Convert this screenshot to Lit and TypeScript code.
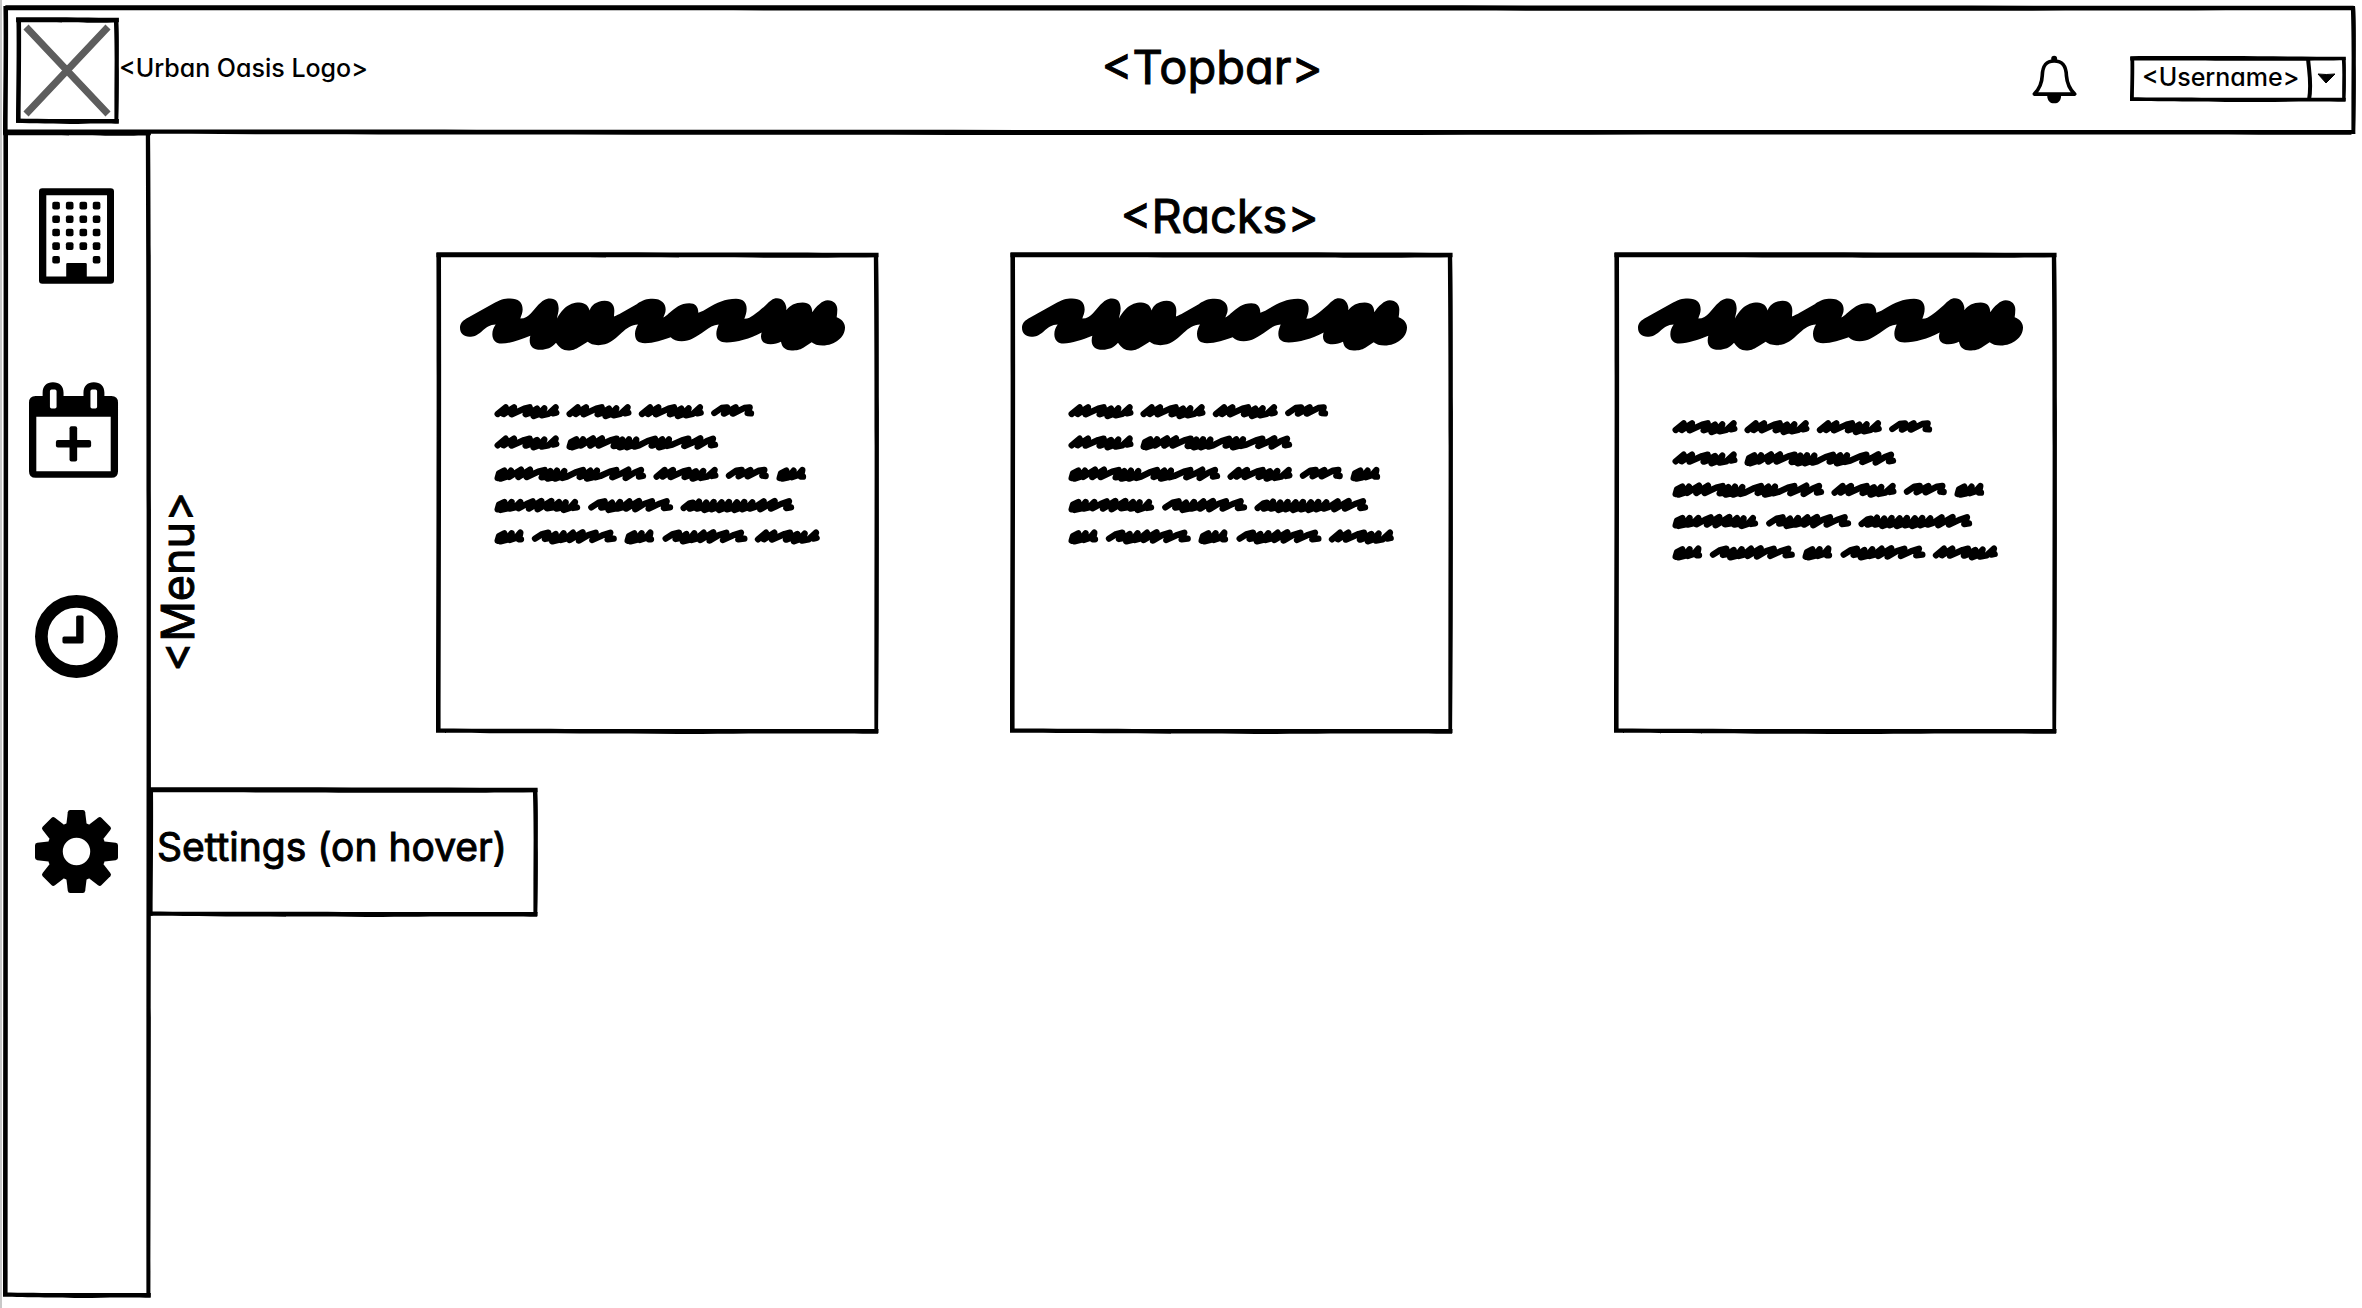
import { LitElement, html, svg, css } from "lit";
import { customElement, property } from "lit/decorators.js";
import { classMap } from "lit/directives/class-map.js";

/**
 * Hand-drawn rectangle over its positioned parent. Each edge stretches only
 * along its own length, so the wobble stays within a pixel at any size.
 */
@customElement("sketch-frame")
class SketchFrame extends LitElement {
  static styles = css`
    :host {
      position: absolute;
      inset: 0;
      pointer-events: none;
    }
    svg {
      position: absolute;
      display: block;
    }
    .top,
    .bottom {
      left: 0;
      width: 100%;
      height: 6px;
    }
    .left,
    .right {
      top: 1px;
      width: 6px;
      height: calc(100% - 2px);
    }
    .top {
      top: 0;
    }
    .bottom {
      bottom: 0;
    }
    .left {
      left: 0;
    }
    .right {
      right: 0;
    }
    :host([thin]) .top,
    :host([thin]) .bottom {
      height: 5px;
    }
    :host([thin]) .left,
    :host([thin]) .right {
      width: 5px;
    }
  `;

  render() {
    return html`
      <svg class="top" viewBox="0 0 100 6" preserveAspectRatio="none" aria-hidden="true">
        <path d="M0.1 0.2 C30 0 70 0.4 99.9 0.8 L99.9 5.2 C80 6.2 60 5.4 0.1 5.3 Z" />
      </svg>
      <svg class="right" viewBox="0 0 6 100" preserveAspectRatio="none" aria-hidden="true">
        <path d="M5 0 C6 5 6 25 5.9 50 C6 80 5.6 90 5.4 100 L1.4 100 C1.2 80 1.6 60 1.6 40 C1.6 20 1.2 10 0.8 0 Z" />
      </svg>
      <svg class="bottom" viewBox="0 0 100 6" preserveAspectRatio="none" aria-hidden="true">
        <path d="M0 0.4 C25 1 60 1 99.9 1 L99.8 5.8 C90 5.4 75 5.4 60 6 C40 6 15 5.4 0 4.8 Z" />
      </svg>
      <svg class="left" viewBox="0 0 6 100" preserveAspectRatio="none" aria-hidden="true">
        <path d="M0.4 0 C1 30 0.2 70 0 99.8 L4.6 99.8 C4.8 70 5.4 30 5 0 Z" />
      </svg>
    `;
  }
}

const WORDS: Record<string, string> = {
  a: "8,30 32,10 26,30 57,10 50,31 88,14 104,10 92,31 106,26 126,14 116,36 132,30 148,13 140,34 160,30 182,10 174,28 184,26",
  b: "8,27 30,12 46,10 37,29 72,10 64,29 98,12 114,10 108,27 118,28",
  c: "8,34 12,20 28,12 16,36 34,30 48,12 42,31 78,9 70,31 105,9 95,31 130,15 149,10 140,32 154,30 166,13 158,36 174,32 186,12 180,36 196,30 208,13 202,34 216,30 242,17 264,10 254,31 268,26 286,12 276,36 292,32 306,12 300,32 316,28 345,15 364,10 352,32 380,20 400,9 392,34 420,17 438,10 432,30 444,28",
  d: "8,34 12,20 28,12 16,36 34,32 50,12 44,32 62,26 76,10 72,30 78,30",
  e: "8,34 12,20 28,12 16,36 34,32 50,12 44,32 60,28 76,12 70,31 95,18 113,10 102,32 139,9 128,34 169,9 156,31 174,28 192,12 184,32 202,28 212,13 206,36 224,30 240,12 234,30 246,28",
  f: "8,28 30,14 48,10 38,29 54,26 70,14 60,36 78,32 94,12 86,32 100,28 122,10 112,32 151,9 140,34 168,17 190,10 180,32 210,18 234,10 226,30 244,28",
  g: "8,30 26,16 36,14 26,32 44,26 54,11 48,32 64,28 76,14 70,36 86,30 98,12 92,34 108,28 122,13 114,36 130,30 144,12 138,34 154,30 168,13 160,36 176,30 190,12 184,34 200,28 214,13 206,32 224,26 248,10 238,34 281,9 270,32 300,18 324,10 316,30 330,28",
};

const LINES: [string, number][][] = [
  [["a", 0], ["a", 216], ["a", 433], ["b", 650]],
  [["a", 0], ["c", 216]],
  [["c", 0], ["a", 477], ["b", 694], ["d", 846]],
  [["e", 0], ["f", 281], ["g", 558]],
  [["d", 0], ["f", 112], ["d", 390], ["f", 504], ["a", 781]],
];

/** A rack card whose heading and copy are scribbled placeholders. */
@customElement("rack-card")
class RackCard extends LitElement {
  @property() variant = "";

  static styles = css`
    :host {
      display: block;
      min-width: 0;
    }
    .card {
      position: relative;
      box-sizing: border-box;
      height: 482px;
      padding: 46px 34px 0 24px;
    }
    .card.tight {
      padding-left: 12px;
      padding-right: 46px;
    }
    svg {
      display: block;
      max-width: 100%;
    }
    .title {
      width: 385px;
      height: 53px;
    }
    .copy {
      width: 325px;
      height: 140px;
      margin: 53px 0 0 35px;
      overflow: visible;
    }
    .tight .copy {
      margin-left: 47px;
    }
    .low .copy {
      margin-top: 69px;
    }
    polyline {
      fill: none;
      stroke: #000;
      stroke-width: 19;
      stroke-linecap: round;
      stroke-linejoin: round;
    }
  `;

  render() {
    const cls = { card: true, tight: this.variant === "tight", low: this.variant === "low" };
    return html`
      <article class=${classMap(cls)}>
        <sketch-frame></sketch-frame>
        <svg class="title" viewBox="90 158 1155 158" aria-hidden="true">
          <path
            d="M90 247 C90 235 97 227 108 220 L190 174 C210 163 222 159 240 159 C265 159 278 170 278 192 C278 203 273 212 271 219 C285 219 295 212 303 203 L325 178 C337 166 346 159 360 159 C378 159 385 170 386 188 C386 200 382 210 381 219 C386 210 392 200 402 190 C418 175 432 171 448 171 C465 171 476 182 479 195 C484 180 498 167 524 166 C545 166 553 180 553 195 C553 203 552 208 552 213 C560 210 566 207 575 202 L620 176 C640 163 650 160 668 160 C695 160 707 175 707 192 C707 203 702 210 700 216 C706 213 710 210 715 205 C735 187 752 173 778 173 C795 173 805 182 805 202 C815 199 825 193 835 187 C860 173 885 160 918 160 C940 160 950 172 950 190 C950 203 946 212 943 220 C955 219 962 215 970 209 C985 198 995 190 1007 179 C1020 166 1028 158 1041 158 C1058 158 1066 170 1069 185 L1069 194 C1080 180 1095 171 1118 171 C1138 171 1146 182 1147 200 C1155 188 1160 182 1168 176 C1178 167 1185 164 1193 164 C1212 164 1222 177 1222 192 C1222 200 1221 208 1220 215 C1235 220 1245 232 1245 246 C1245 275 1215 300 1178 300 C1163 300 1152 296 1145 290 L1120 307 C1108 314 1100 315 1085 315 C1068 315 1056 307 1053 289 C1043 294 1035 296 1022 296 C1003 296 993 288 993 272 C993 268 994 264 995 261 C960 280 920 291 890 291 C870 291 859 283 859 265 C859 255 862 247 866 237 C850 238 838 246 825 256 C795 277 780 287 755 287 C740 287 730 283 722 275 C700 283 670 293 645 293 C625 293 615 285 615 265 C615 255 619 245 624 237 C605 238 590 248 575 262 C550 285 535 299 505 299 C490 299 480 295 473 289 L450 303 C435 312 428 315 415 315 C398 315 388 307 378 292 C365 307 350 313 332 313 C310 313 299 303 299 285 C299 280 300 275 301 271 C270 283 240 294 215 294 C197 294 187 283 187 266 C187 255 191 246 197 237 C180 237 168 246 155 258 C140 270 132 274 118 274 C101 274 90 263 90 247 Z"
          />
        </svg>
        <svg class="copy" viewBox="0 0 975 420" aria-hidden="true">
          ${LINES.map(
            (line, row) => svg`<g transform="translate(0 ${row * 94})">
              ${line.map(([w, x]) => svg`<polyline transform="translate(${x} 0)" points=${WORDS[w]} />`)}
            </g>`
          )}
        </svg>
      </article>
    `;
  }
}

const buildingIcon = html`
  <svg width="75" height="96" viewBox="119 83 226 288" aria-hidden="true">
    <path
      fill-rule="evenodd"
      d="M129 83 H335 Q345 83 345 93 V361 Q345 371 335 371 H129 Q119 371 119 361 V93 Q119 83 129 83 Z M141 104 V349 H201 V312 Q201 308 205 308 H259 Q263 308 263 312 V349 H324 V104 Z"
    />
    ${[124, 165, 205, 246, 287].map((y, row) =>
      [159, 200, 241, 281].map((x, col) =>
        row === 4 && (col === 1 || col === 2)
          ? null
          : svg`<rect x=${x} y=${y} width="23" height="23" rx="6" />`
      )
    )}
  </svg>
`;

const calendarIcon = html`
  <svg width="95" height="96" viewBox="88 667 286 288" aria-hidden="true">
    <path
      fill-rule="evenodd"
      d="M108 709 H129 V699 C129 678 141 667 160 667 C180 667 192 678 192 699 V709 H252 V699 C252 678 264 667 283 667 C303 667 315 678 315 699 V709 H336 Q356 709 356 729 V935 Q356 955 336 955 H108 Q88 955 88 935 V729 Q88 709 108 709 Z M110 771 V935 H334 V771 Z M156 689 Q151 689 151 694 V741 Q151 746 156 746 H166 Q171 746 171 741 V694 Q171 689 166 689 Z M278 689 Q273 689 273 694 V741 Q273 746 278 746 H288 Q293 746 293 741 V694 Q293 689 288 689 Z"
    />
    <rect x="169" y="841" width="106" height="23" rx="6" />
    <rect x="210" y="800" width="23" height="106" rx="6" />
  </svg>
`;

const clockIcon = html`
  <svg width="83" height="83" viewBox="-124 -124 248 248" aria-hidden="true">
    <circle r="105" fill="none" stroke="#000" stroke-width="38" />
    <path d="M4 -63 H16 Q21 -63 21 -58 V16 Q21 21 16 21 H-37 Q-42 21 -42 16 V5 Q-42 0 -37 0 H-1 V-58 Q-1 -63 4 -63 Z" />
  </svg>
`;

const gearIcon = html`
  <svg width="83" height="83" viewBox="-124 -124 248 248" aria-hidden="true">
    <circle r="65" fill="none" stroke="#000" stroke-width="48" />
    ${[0, 45, 90, 135, 180, 225, 270, 315].map(
      (a) => svg`<path transform="rotate(${a})" d="M-30 -84 L-26 -117 Q-25 -124 -19 -124 H19 Q25 -124 26 -117 L30 -84 L20 -70 H-20 Z" />`
    )}
  </svg>
`;

@customElement("app-root")
class AppRoot extends LitElement {
  static styles = css`
    :host {
      display: block;
      color: #000;
      font-family: Inter, "Open Sans", sans-serif;
      font-feature-settings: "cv11";
      font-weight: 500;
    }
    .page {
      box-sizing: border-box;
      display: flex;
      flex-direction: column;
      min-height: 100vh;
      padding-bottom: 10px;
      border-left: 2px solid #c8c8c8;
      background: #fff;
    }
    svg {
      display: block;
    }
    h1,
    h2 {
      margin: 0;
      font-size: 47px;
      line-height: 56px;
      font-weight: 400;
      -webkit-text-stroke: 1px #000;
      stroke-linejoin: round;
    }
    .topbar {
      position: relative;
      box-sizing: border-box;
      display: grid;
      grid-template-columns: 1fr auto 1fr;
      align-items: center;
      height: 130px;
      margin: 5px 6px 0 1px;
      padding: 0 10px 0 13px;
    }
    .topbar h1 {
      padding: 0 0 6px 62px;
    }
    .brand {
      display: flex;
      align-items: center;
    }
    .logo {
      position: relative;
      width: 103px;
      height: 107px;
    }
    .cross {
      stroke: #5d5d5d;
      stroke-width: 7;
    }
    .brand-name {
      padding: 0 0 4px 0;
      font-size: 25px;
      line-height: 32px;
    }
    .account {
      display: flex;
      align-items: center;
      justify-content: flex-end;
      gap: 53px;
      padding-top: 18px;
    }
    button {
      display: block;
      padding: 0;
      border: 0;
      background: none;
      color: inherit;
      cursor: pointer;
    }
    .user {
      position: relative;
      width: 216px;
      height: 46px;
    }
    .user select {
      width: 100%;
      height: 100%;
      padding: 0 38px 4px 12px;
      border: 0;
      background: none;
      color: inherit;
      font: inherit;
      font-size: 25px;
      font-feature-settings: inherit;
      appearance: none;
    }
    .caret {
      position: absolute;
      top: 0;
      right: 0;
      pointer-events: none;
    }
    .body {
      flex: 1;
      display: flex;
      align-items: stretch;
      margin: -5px 0 0 1px;
    }
    .rail {
      position: relative;
      box-sizing: border-box;
      flex: none;
      width: 148px;
      padding-top: 5px;
    }
    .rail ul {
      display: grid;
      grid-template-rows: 201px 188px 225px 205px;
      margin: 0;
      padding: 0;
      list-style: none;
    }
    .rail li {
      position: relative;
      display: grid;
      place-items: center;
      padding-right: 1px;
    }
    .tip {
      position: absolute;
      left: 145px;
      box-sizing: border-box;
      display: flex;
      align-items: center;
      width: 390px;
      height: 130px;
      padding: 0 0 10px 9px;
      font-size: 39px;
      line-height: 48px;
      font-weight: 400;
      white-space: nowrap;
      -webkit-text-stroke: 1px #000;
      stroke-linejoin: round;
    }
    main {
      flex: 1;
      display: grid;
      grid-template-columns: 285fr 443fr 131fr 443fr 161fr 443fr 305fr;
      grid-template-rows: 122px auto;
      align-content: start;
    }
    main h2 {
      grid-area: 1 / 4;
      align-self: end;
      padding: 0 24px 8px 0;
      text-align: center;
    }
    main .menu-label {
      grid-area: 2 / 1;
      place-self: end start;
      padding: 0 0 62px;
      font-size: 45px;
      line-height: 54px;
      writing-mode: vertical-rl;
    }
    .menu-label span {
      display: block;
      rotate: 180deg;
    }
    .first {
      grid-area: 2 / 2;
    }
    .second {
      grid-area: 2 / 4;
    }
    .third {
      grid-area: 2 / 6;
    }
  `;

  render() {
    return html`
      <div class="page">
        <header class="topbar">
          <sketch-frame></sketch-frame>
          <div class="brand">
            <div class="logo">
              <sketch-frame></sketch-frame>
              <svg class="cross" width="103" height="107" viewBox="0 0 103 107" aria-hidden="true">
                <path d="M10 10 L92 97 M92 10 L10 97" />
              </svg>
            </div>
            <span class="brand-name">&lt;Urban Oasis Logo&gt;</span>
          </div>
          <h1>&lt;Topbar&gt;</h1>
          <div class="account">
            <button aria-label="Notifications">
              <svg width="45" height="49" viewBox="155 163 136 146" aria-hidden="true">
                <path
                  fill="none"
                  stroke="#000"
                  stroke-width="11"
                  stroke-linejoin="round"
                  d="M162 280 C178 264 185 250 186 224 C187 196 196 180 222 180 C249 180 258 196 259 224 C261 250 268 264 284 280 Z"
                />
                <circle cx="222" cy="173" r="9" />
                <path d="M201 284 C201 299 209 308 222 308 C235 308 243 299 243 284 Z" />
              </svg>
            </button>
            <div class="user">
              <sketch-frame thin></sketch-frame>
              <select aria-label="Account">
                <option>&lt;Username&gt;</option>
              </select>
              <svg class="caret" width="40" height="46" viewBox="0 0 40 46" aria-hidden="true">
                <path fill="none" stroke="#000" stroke-width="4" d="M2 2 C3 16 6 28 3 44" />
                <path d="M12 18 Q20 19 29 18 L20 27 Z" stroke="#000" stroke-linejoin="round" />
              </svg>
            </div>
          </div>
        </header>
        <div class="body">
          <nav class="rail" aria-label="Menu">
            <sketch-frame></sketch-frame>
            <ul>
              <li><button aria-label="Buildings">${buildingIcon}</button></li>
              <li><button aria-label="Add event">${calendarIcon}</button></li>
              <li><button aria-label="History">${clockIcon}</button></li>
              <li>
                <button aria-labelledby="settings-tip">${gearIcon}</button>
                <div class="tip" id="settings-tip" role="tooltip">
                  <sketch-frame></sketch-frame>Settings (on hover)
                </div>
              </li>
            </ul>
          </nav>
          <main>
            <h2>&lt;Racks&gt;</h2>
            <h2 class="menu-label"><span>&lt;Menu&gt;</span></h2>
            <rack-card class="first"></rack-card>
            <rack-card class="second" variant="tight"></rack-card>
            <rack-card class="third" variant="low"></rack-card>
          </main>
        </div>
      </div>
    `;
  }
}
